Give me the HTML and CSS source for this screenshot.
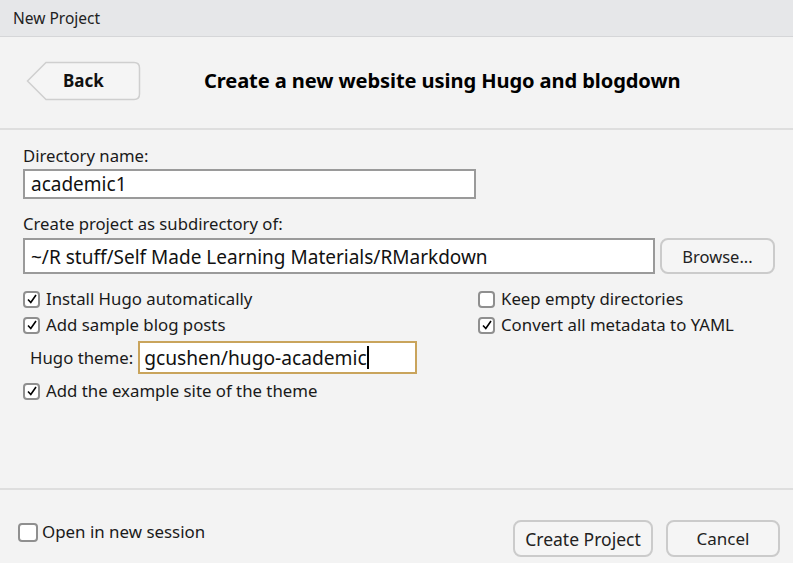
FILE: index.html
```html
<!DOCTYPE html>
<html>
<head>
<meta charset="utf-8">
<link rel="stylesheet" href="styles.css">
</head>
<body>
<div class="window">
  <div class="titlebar">New Project</div>
  <div class="header">
    <div class="back">
      <svg class="back-shape" width="115" height="40" viewBox="0 0 115 40">
        <path d="M1.5 20 L20 1.5 H108 Q113.5 1.5 113.5 7 V33 Q113.5 38.5 108 38.5 H20 Z" fill="#f5f5f5" stroke="#cfcfcf" stroke-width="1.5"/>
      </svg>
      <span class="back-label">Back</span>
    </div>
    <h1 class="heading">Create a new website using Hugo and blogdown</h1>
  </div>
  <div class="form">
    <div class="label">Directory name:</div>
    <div class="input dir">academic1</div>
    <div class="label second">Create project as subdirectory of:</div>
    <div class="path-row">
      <div class="input path">~/R stuff/Self Made Learning Materials/RMarkdown</div>
      <div class="btn browse">Browse...</div>
    </div>
    <div class="options">
      <div class="col left">
        <label class="cb"><span class="box checked"><svg width="12" height="12" viewBox="0 0 12 12"><path d="M2 6.5 L4.8 9.5 L10 2" fill="none" stroke="#000" stroke-width="1.6"/></svg></span>Install Hugo automatically</label>
        <label class="cb"><span class="box checked"><svg width="12" height="12" viewBox="0 0 12 12"><path d="M2 6.5 L4.8 9.5 L10 2" fill="none" stroke="#000" stroke-width="1.6"/></svg></span>Add sample blog posts</label>
      </div>
      <div class="col right">
        <label class="cb"><span class="box"></span>Keep empty directories</label>
        <label class="cb"><span class="box checked"><svg width="12" height="12" viewBox="0 0 12 12"><path d="M2 6.5 L4.8 9.5 L10 2" fill="none" stroke="#000" stroke-width="1.6"/></svg></span>Convert all metadata to YAML</label>
      </div>
    </div>
    <div class="theme-row">
      <span class="theme-label">Hugo theme:</span>
      <div class="input theme">gcushen/hugo-academic<span class="caret"></span></div>
    </div>
    <label class="cb"><span class="box checked"><svg width="12" height="12" viewBox="0 0 12 12"><path d="M2 6.5 L4.8 9.5 L10 2" fill="none" stroke="#000" stroke-width="1.6"/></svg></span>Add the example site of the theme</label>
  </div>
  <div class="footer">
    <label class="cb session"><span class="box"></span>Open in new session</label>
    <div class="buttons">
      <div class="btn create">Create Project</div>
      <div class="btn cancel">Cancel</div>
    </div>
  </div>
</div>
</body>
</html>
```
FILE: styles.css
```css
* { box-sizing: border-box; }
html, body { margin: 0; padding: 0; }
body {
  width: 793px;
  height: 563px;
  background: #f3f3f3;
  font-family: "Noto Sans", "Open Sans", sans-serif;
  color: #1a1a1a;
  overflow: hidden;
}
.window {
  display: flex;
  flex-direction: column;
  height: 563px;
}
.titlebar {
  height: 37px;
  background: #e6e7e9;
  border-bottom: 1px solid #d5d6d8;
  font-size: 15.5px;
  padding-left: 13px;
  line-height: 36px;
  color: #222;
}
.header {
  height: 93px;
  display: flex;
  align-items: center;
  padding-left: 26px;
  border-bottom: 2px solid #dedede;
  padding-bottom: 4px;
}
.back {
  display: grid;
  width: 115px;
  height: 40px;
}
.back-shape, .back-label { grid-area: 1 / 1; }
.back-label {
  align-self: center;
  justify-self: start;
  margin-left: 37px;
  font-weight: bold;
  font-size: 17px;
  color: #111;
}
.heading {
  margin: 0 0 0 63px;
  font-size: 20.1px;
  font-weight: bold;
  color: #000;
  letter-spacing: -0.1px;
}
.form {
  padding: 14px 0 0 23px;
  display: flex;
  flex-direction: column;
  align-items: flex-start;
  height: 358px;
}
.label {
  font-size: 16.7px;
  line-height: 23px;
}
.label.second { margin-top: 13px; }
.input {
  background: #fff;
  border: 2px solid #9a9a9a;
  font-size: 19px;
  padding-left: 6px;
  color: #111;
}
.input.dir {
  width: 453px;
  height: 30px;
  line-height: 26px;
  margin-top: 2px;
}
.path-row {
  display: flex;
  gap: 5px;
  margin-top: 3px;
}
.input.path {
  width: 632px;
  height: 36px;
  line-height: 34px;
}
.btn {
  background: #f5f5f5;
  border: 2px solid #cbcbcb;
  border-radius: 8px;
  font-size: 16.5px;
  color: #222;
  display: flex;
  align-items: center;
  justify-content: center;
}
.browse { width: 115px; height: 36px; }
.options {
  display: flex;
  margin-top: 14px;
}
.col { display: flex; flex-direction: column; gap: 4px; }
.col.left { width: 455px; }
.cb {
  display: flex;
  align-items: center;
  gap: 6px;
  font-size: 16.8px;
  line-height: 22px;
  color: #1a1a1a;
}
.box {
  width: 17px;
  height: 17px;
  border: 2px solid #8f8f8f;
  border-radius: 4px;
  background: #fff;
  display: flex;
  align-items: center;
  justify-content: center;
}
.theme-row {
  display: flex;
  align-items: center;
  margin-top: 5px;
  margin-left: 7px;
  gap: 5px;
}
.theme-label { font-size: 16.8px; }
.input.theme {
  width: 279px;
  height: 33px;
  line-height: 29px;
  border-color: #c9a45c;
  display: flex;
  align-items: center;
  font-size: 19.2px;
  padding-left: 4px;
}
.caret {
  display: inline-block;
  width: 2px;
  height: 23px;
  background: #000;
}
.theme-row + .cb { margin-top: 6px; }
.footer {
  border-top: 2px solid #dedede;
  flex: 1;
  display: flex;
  align-items: flex-end;
  justify-content: space-between;
  padding: 0 13px 6px 18px;
}
.session { margin-bottom: 14px; gap: 4px; font-size: 16.9px; }
.session .box { width: 20px; height: 19px; }
.buttons { display: flex; gap: 13px; }
.create { width: 140px; height: 37px; font-size: 17.5px; }
.cancel { width: 114px; height: 37px; font-size: 17px; }
```
